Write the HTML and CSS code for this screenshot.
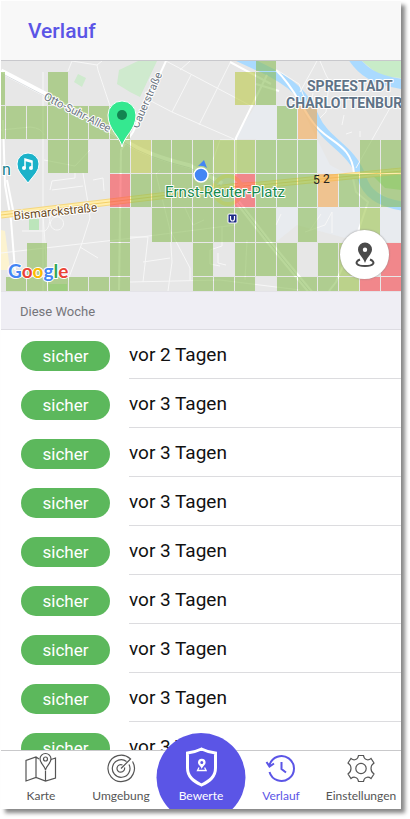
FILE: index.html
```html
<!DOCTYPE html>
<html lang="de">

<head>
    <meta charset="UTF-8">
    <meta name="viewport" content="width=device-width, initial-scale=1.0">
    <title>Verlauf</title>
    <link rel="stylesheet" href="styles.css">
</head>

<body>
    <div class="screen">
        <header class="header">
            <h1>Verlauf</h1>
        </header>

        <div class="map">
            <svg class="map-canvas" viewBox="1 61 400 230" preserveAspectRatio="xMidYMid slice">
                <rect x="1" y="61" width="400" height="230" fill="#e7e7e7" />
                <!-- blocks, parks and water -->
                <path d="M234 139L256 105L300 105L330 165L345 173L401 205V242L360 242L297 225L276 242V208H256V139Z" fill="#e8ebef" />
                <path d="M1 230L5 231L10 270H1Z" fill="#fcf3d0" />
                <path d="M119 70L138 61H157L140 97L130 92L117 84Z" fill="#cfeace" />
                <path d="M78 74L86 78L82 87L74 82Z" fill="#cfeace" />
                <path d="M362 61H401V78L380 76Z" fill="#c8ecc8" />
                <path d="M372 175H401V190L385 188Z" fill="#b5e3a8" />
                <path d="M29 219H39V230H29ZM48 284H67V291H48Z" fill="#bce5bb" />
                <g fill="none" stroke="#aadaff">
                    <path d="M236 56L262 68C292 82 306 96 315 118C326 143 352 148 362 178C367 195 382 203 402 206" stroke-width="9" />
                    <path d="M352 56C362 72 375 80 402 84" stroke-width="10" />
                </g>

                <!-- streets -->
                <g class="street-thin">
                    <path d="M68 71L72 61M72 61L97 65L102 61M97 65L98 70L109 103L125 140" />
                    <path d="M1 130L30 127Q42 128 44 135M43 72V291M44 160L75 166L90 150M88 61" />
                    <path d="M50 190L52 181L75 178V173M52 190L83 186M83 173L88 203L90 218L82 243L68 280M22 231H45Q50 228 50 216M1 253L80 244L133 238L235 225M80 247L98 258" />
                    <path d="M43 216L45 242L48 291M56 217A6 6 0 1 0 58 230A6 6 0 1 0 56 217M93 180L103 178L104 191" />
                    <path d="M166 61L217 88L253 107M230 63L199 125M191 75L172 112M172 112L151 101M172 112L236 140M180 70L190 61" />
                    <path d="M235 140H220L213 160V174M160 170L156 174L170 230L190 268V280M170 230L172 262L168 291M130 237H148L143 282M143 262L170 258M130 282L220 280L300 290M185 208L193 225L204 220M222 226V246L210 250V264L220 266M218 253V263L226 265M247 240L245 280" />
                    <path d="M317 61L300 92M277 70L299 84L304 97M320 61L326 75L330 82M329 83L326 112L320 118M312 99L313 93M390 108L356 168M342 125L344 115M346 134L352 132M360 131V137" />
                    <path d="M305 232L325 225L332 212V233M310 230L321 214M276 225L281 214" />
                </g>
                <g class="street">
                    <path d="M3 120L5 185L11 220L15 270M7 180L13 210" />
                    <path d="M166 61L133 132L121 150L119 290" />
                    <path d="M267 75L236 138V190M230 62L271 84M256 84L279 91" />
                    <path d="M276 70C294 87 300 105 312 121C326 143 352 142 354 174M352 174L356 192L368 202L358 232L336 282L329 291" />
                </g>
                <g class="street-wide">
                    <path d="M1 71L45 94L125 141Q145 155 190 166L222 184M236 200L268 241L312 294" />
                </g>
                <g fill="none">
                    <path d="M1 215L110 202L210 190Q230 186 260 185L402 171" stroke="#f5d77e" stroke-width="7" />
                    <path d="M1 215L110 202L210 190Q230 186 260 185L402 171" stroke="#ffedaa" stroke-width="5" />
                    <path d="M1 215L110 202L210 190Q230 186 260 185L402 171" stroke="#f3cf67" stroke-width="1" />
                    <circle cx="228" cy="190" r="14" stroke="#fbe59a" stroke-width="4" />
                    <path d="M1 73L45 96L125 143Q145 157 190 168L222 186M236 200L268 241L312 294" stroke="#dcdfe2" stroke-width="1" />
                </g>

                <!-- rating grid -->
                <g class="cells">
                    <path class="cell-safe" d="M256 61h20v10h-20z
                        M1 72h4v33h-4z M48 72h20v33h-20z M256 72h20v33h-20z
                        M1 106h4v33h-4z M6 106h20v33h-20z M27 106h20v33h-20z M48 106h20v33h-20z M69 106h19v33h-19z M89 106h20v33h-20z M110 106h20v33h-20z M277 106h20v33h-20z
                        M48 140h20v33h-20z M69 140h19v33h-19z M110 140h20v33h-20z M152 140h19v33h-19z M172 140h20v33h-20z M193 140h20v33h-20z M256 140h20v33h-20z M277 140h20v33h-20z M298 140h19v33h-19z M360 140h20v33h-20z M381 140h20v33h-20z
                        M131 174h20v33h-20z M152 174h19v33h-19z M172 174h20v33h-20z M193 174h20v33h-20z M214 174h20v33h-20z M256 174h20v33h-20z M277 174h20v33h-20z M298 174h19v33h-19z M339 174h20v33h-20z M360 174h20v33h-20z M381 174h20v33h-20z
                        M110 208h20v34h-20z M152 208h19v34h-19z M172 208h20v34h-20z M193 208h20v34h-20z M214 208h20v34h-20z M235 208h20v34h-20z M256 208h20v34h-20z M298 208h19v34h-19z
                        M27 243h20v33h-20z M110 243h20v33h-20z M193 243h20v33h-20z M235 243h20v33h-20z M256 243h20v33h-20z M277 243h20v33h-20z M318 243h20v33h-20z
                        M6 277h20v14h-20z M27 277h20v14h-20z M48 277h20v14h-20z M69 277h19v14h-19z M89 277h20v14h-20z M110 277h20v14h-20z M193 277h20v14h-20z M214 277h20v14h-20z M235 277h20v14h-20z M277 277h20v14h-20z M298 277h19v14h-19z M318 277h20v14h-20z" />
                    <path class="cell-fair" d="M214 140h20v33h-20z M235 140h20v33h-20z M360 208h20v34h-20z M339 243h20v33h-20z M339 277h20v14h-20z" />
                    <path class="cell-medium" d="M235 72h20v33h-20z M131 140h20v33h-20z" />
                    <path class="cell-warn" d="M298 106h19v33h-19z M318 174h20v33h-20z" />
                    <path class="cell-unsafe" d="M110 174h20v33h-20z M235 174h20v33h-20z M360 277h20v14h-20z M381 243h20v33h-20z M381 277h20v14h-20z" />
                </g>

                <!-- labels -->
                <text class="label-street" transform="translate(43 99) rotate(27)">Otto-Suhr-Allee</text>
                <text class="label-street" transform="translate(138 129) rotate(-66)">Cauerstraße</text>
                <text class="label-main" transform="translate(14 220) rotate(-6)">Bismarckstraße</text>
                <text class="label-district" x="307" y="91">SPREESTADT</text>
                <text class="label-district" x="286" y="108">CHARLOTTENBURG</text>
                <text class="label-place" x="165" y="197">Ernst-Reuter-Platz</text>
                <text class="label-number" x="313" y="184">5</text>
                <text class="label-number" x="323" y="183">2</text>
                <text class="label-poi" x="2" y="175">n</text>

                <!-- subway stop -->
                <rect x="228" y="214" width="9" height="9" rx="1" fill="#1d2a86" stroke="#fff" />
                <path d="M230.500 216V218.500Q230.500 221 232.500 221Q234.500 221 234.500 218.500V216" fill="none" stroke="#fff" stroke-width="1.200" />

                <!-- music venue -->
                <path d="M28 183L20 173Q17 169 17 164A11 11 0 0 1 39 164Q39 169 36 173Z" fill="#1bb2c9" stroke="#fff" />
                <path d="M25 168V159L32 161V167" fill="none" stroke="#fff" stroke-width="1.500" />
                <path d="M25 160L32 162" stroke="#fff" stroke-width="2" />
                <circle cx="24" cy="168" r="2" fill="#fff" />
                <circle cx="31" cy="168" r="2" fill="#fff" />

                <!-- own position -->
                <path d="M198 166L204 160L207 168Q203 165 198 166Z" fill="#4385f4" />
                <circle cx="201" cy="175" r="7" fill="#4385f4" stroke="#fff" stroke-width="1.500" />

                <!-- selected rating -->
                <path d="M122 147C120 136 108 130 108 115A14 14 0 0 1 136 115C136 130 124 136 122 147Z" fill="#35e890" stroke="#fff" stroke-width="1" />
                <circle cx="122" cy="115" r="5" fill="#138451" />

                <text class="logo" x="8" y="278"><tspan fill="#4285f4">G</tspan><tspan fill="#ea4335">o</tspan><tspan fill="#fbbc05">o</tspan><tspan fill="#4285f4">g</tspan><tspan fill="#34a853">l</tspan><tspan fill="#ea4335">e</tspan></text>
            </svg>

            <button class="locate" type="button" aria-label="Standort">
                <svg width="20" height="26" viewBox="0 0 20 26">
                    <path d="M5 17.500C-1 20 1 24 10 24S21 20 15 17.500" fill="none" stroke="#4a4a4a" stroke-width="2" />
                    <path fill-rule="evenodd" d="M10 21C8 15 3 12 3 7.500A7 7 0 0 1 17 7.500C17 12 12 15 10 21ZM10 5.500A2.200 2.200 0 1 0 10 9.900A2.200 2.200 0 1 0 10 5.500Z" fill="#4a4a4a" />
                </svg>
            </button>
        </div>

        <h2 class="section-title">Diese Woche</h2>

        <ul class="history">
            <li><span class="badge">sicher</span><span class="time">vor 2 Tagen</span></li>
            <li><span class="badge">sicher</span><span class="time">vor 3 Tagen</span></li>
            <li><span class="badge">sicher</span><span class="time">vor 3 Tagen</span></li>
            <li><span class="badge">sicher</span><span class="time">vor 3 Tagen</span></li>
            <li><span class="badge">sicher</span><span class="time">vor 3 Tagen</span></li>
            <li><span class="badge">sicher</span><span class="time">vor 3 Tagen</span></li>
            <li><span class="badge">sicher</span><span class="time">vor 3 Tagen</span></li>
            <li><span class="badge">sicher</span><span class="time">vor 3 Tagen</span></li>
            <li><span class="badge">sicher</span><span class="time">vor 3 Tagen</span></li>
        </ul>

        <nav class="tabs">
            <a class="tab" href="#karte">
                <svg class="tab-icon" viewBox="0 0 32 32">
                    <path d="M14 7L11 5L1 8.500V29L11 25.500L20.500 29L30.500 26V6L26 7.500M11 5V25.500M20.500 18.500V29" />
                    <path d="M20.500 18C19.500 13 15 11.500 15 7A5.500 5.500 0 0 1 26 7C26 11.500 21.500 13 20.500 18Z" />
                    <circle cx="20.500" cy="7" r="2" />
                </svg>
                <span>Karte</span>
            </a>
            <a class="tab" href="#umgebung">
                <svg class="tab-icon" viewBox="0 0 32 32">
                    <path d="M25 6.500A13.200 13.200 0 1 0 27.500 9.500M21.500 9.500A8.800 8.800 0 1 0 24 12.500M17.500 13A3.800 3.800 0 1 0 19.500 15.500M16 16.500L26 6.500" />
                </svg>
                <span>Umgebung</span>
            </a>
            <a class="tab tab-rate" href="#bewerte">
                <svg class="rate-icon" width="32" height="40" viewBox="0 0 32 40">
                    <path d="M16 2Q10 5 2 6V21C2 30 8 34 16 38C24 34 30 30 30 21V6Q22 5 16 2Z" fill="none" stroke="#fff" stroke-width="3" />
                    <path fill-rule="evenodd" d="M16.300 22C15.300 19 12.500 18 12.500 15.500A3.800 3.800 0 0 1 20.100 15.500C20.100 18 17.300 19 16.300 22ZM16.300 14A1.500 1.500 0 1 0 16.300 17A1.500 1.500 0 1 0 16.300 14Z" fill="#fff" />
                    <path d="M13.500 20.500L12 23.500H20.600L19.100 20.500" fill="none" stroke="#fff" stroke-width="1.300" />
                </svg>
                <span>Bewerte</span>
            </a>
            <a class="tab tab-active" href="#verlauf" aria-current="page">
                <svg class="tab-icon" viewBox="0 0 32 32">
                    <path d="M4.500 13A12.500 12.500 0 1 1 4.500 20M1.500 10L4.500 14.500L9 11.500M16.500 10V17L21 20.500" />
                </svg>
                <span>Verlauf</span>
            </a>
            <a class="tab" href="#einstellungen">
                <svg class="tab-icon" viewBox="0 0 32 32">
                    <path d="M13.500 3.500H18.500Q19 7 21.500 7.500Q23.500 8.500 26 6.500L29 11Q26 13 26 16.500Q26 20 29 22L26 26.500Q23.500 24.500 21.500 25.500Q19 26 18.500 29.500H13.500Q13 26 10.500 25.500Q8.500 24.500 6 26.500L3 22Q6 20 6 16.500Q6 13 3 11L6 6.500Q8.500 8.500 10.500 7.500Q13 7 13.500 3.500Z" />
                    <circle cx="16" cy="16.500" r="5.200" />
                </svg>
                <span>Einstellungen</span>
            </a>
        </nav>
    </div>
</body>

</html>
```

FILE: styles.css
```css
* {
    box-sizing: border-box;
}

body {
    margin: 0;
    height: 100vh;
    padding: 1px 9px 10px 1px;
    overflow: hidden;
    background-color: #fff;
    font-family: Roboto, Arial, sans-serif;
}

.screen {
    display: flex;
    flex-direction: column;
    height: 100%;
    background-color: #fff;
    box-shadow: 4px 4px 4px #888;
    overflow: hidden;
}

.header {
    flex: none;
    display: flex;
    align-items: center;
    height: 60px;
    padding: 0 27px;
    background-color: #f8f8f8;
    border-bottom: 1px solid #c8c8cc;
}

h1 {
    margin: 0;
    font-size: 21px;
    font-weight: 500;
    color: #5b55e6;
}

/* Map */
.map {
    flex: none;
    position: relative;
    height: 230px;
}

.map-canvas {
    display: block;
    width: 100%;
    height: 100%;
}

.street-thin,
.street,
.street-wide {
    fill: none;
    stroke: #fff;
    stroke-width: 1px;
}

.street-thin {
    stroke: #f7f7f7;
}

.street {
    stroke-width: 2px;
}

.street-wide {
    stroke-width: 5px;
}

.cells {
    fill-opacity: 0.6;
}

.cell-safe {
    fill: #8bbc56;
}

.cell-fair {
    fill: #9ec54e;
}

.cell-medium {
    fill: #bcc949;
}

.cell-warn {
    fill: #f4a850;
}

.cell-unsafe {
    fill: #f9484f;
}

.map-canvas text {
    paint-order: stroke;
    stroke: #fff;
    stroke-width: 2px;
    stroke-linejoin: round;
}

.label-street {
    font-size: 11px;
    fill: #6b7480;
}

.label-main {
    font-size: 12px;
    fill: #6b4a20;
}

.label-district {
    font-size: 14px;
    font-weight: 700;
    fill: #5f7387;
}

.label-place {
    font-size: 15px;
    fill: #188a4c;
}

.label-number {
    font-size: 12px;
    fill: #222;
}

.map-canvas .label-number {
    stroke: none;
}

.label-poi {
    font-size: 16px;
    fill: #16818f;
}

.logo {
    font-family: Lato, sans-serif;
    font-size: 19px;
    font-weight: 700;
}

.locate {
    position: absolute;
    right: 12px;
    bottom: 12px;
    display: flex;
    align-items: center;
    justify-content: center;
    width: 49px;
    height: 49px;
    padding: 0;
    border: none;
    border-radius: 50%;
    background-color: #fff;
    box-shadow: 0 0 2px #888;
    cursor: pointer;
}

/* History list */
.section-title {
    flex: none;
    margin: 0;
    height: 39px;
    padding: 0 19px;
    border-top: 1px solid #e4e3e8;
    border-bottom: 1px solid #dddce2;
    background-color: #efeef4;
    font-size: 13px;
    font-weight: 400;
    line-height: 40px;
    color: #75757a;
}

.history {
    flex: 1;
    min-height: 0;
    margin: 0;
    padding: 0 0 0 20px;
    list-style: none;
    overflow: hidden;
}

.history li {
    display: flex;
    align-items: center;
    gap: 19px;
    height: 49px;
}

.badge {
    width: 89px;
    height: 30px;
    margin-top: 2px;
    border-radius: 15px;
    background-color: #5cb85c;
    color: #fff;
    font-size: 17px;
    line-height: 31px;
    text-align: center;
}

.time {
    flex: 1;
    height: 49px;
    border-bottom: 1px solid #dcdcdf;
    font-size: 19px;
    line-height: 50px;
    color: #111;
}

/* Tab bar */
.tabs {
    flex: none;
    position: relative;
    display: flex;
    height: 59px;
    border-top: 1px solid #c9c9cb;
    background-color: #fff;
}

.tab {
    flex: 1;
    min-width: 0;
    display: flex;
    flex-direction: column;
    align-items: center;
    gap: 3px;
    padding-top: 1px;
    font-family: Lato, sans-serif;
    font-size: 12px;
    line-height: 18px;
    color: #555;
    text-decoration: none;
}

.tab-icon {
    width: 32px;
    height: 32px;
    fill: none;
    stroke: currentColor;
    stroke-width: 1.2px;
}

.tab-active {
    color: #5b55e6;
}

.tab-active .tab-icon {
    stroke-width: 2px;
}

.tab-rate {
    position: absolute;
    top: -18px;
    left: 50%;
    width: 89px;
    height: 89px;
    gap: 0;
    padding-top: 14px;
    transform: translateX(-50%);
    border-radius: 50%;
    background-color: #5b55e6;
    color: #fff;
}

.tab-rate + .tab {
    margin-left: 20%;
}
```
